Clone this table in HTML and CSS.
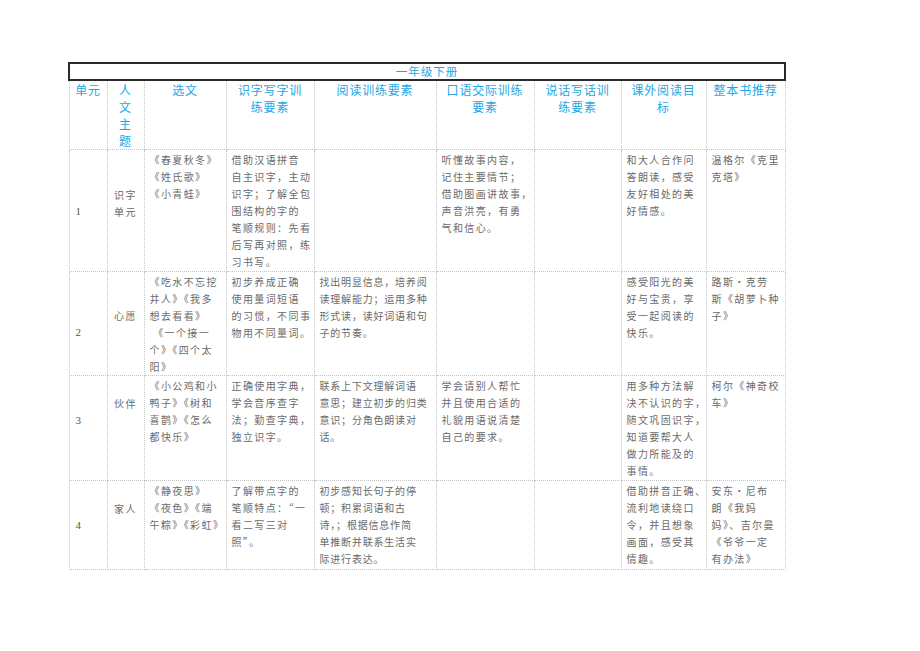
FILE: index.html
```html
<!DOCTYPE html>
<html lang="zh-CN">
<head>
<meta charset="utf-8">
<title>一年级下册</title>
<link rel="stylesheet" href="styles.css">
</head>
<body>
<div class="page">
<table class="plan">
  <colgroup>
    <col class="c1"><col class="c2"><col class="c3"><col class="c4"><col class="c5"><col class="c6"><col class="c7"><col class="c8"><col class="c9">
  </colgroup>
  <tr class="title-row"><td colspan="9">一年级下册</td></tr>
  <tr class="head-row">
    <th>单元</th>
    <th>人<br>文<br>主<br>题</th>
    <th>选文</th>
    <th>识字写字训<br>练要素</th>
    <th>阅读训练要素</th>
    <th>口语交际训练<br>要素</th>
    <th>说话写话训<br>练要素</th>
    <th>课外阅读目<br>标</th>
    <th>整本书推荐</th>
  </tr>
  <tr class="row r1">
    <td class="num">1</td>
    <td class="theme">识字<br>单元<br>&nbsp;</td>
    <td>《春夏秋冬》<br>《姓氏歌》<br>《小青蛙》</td>
    <td>借助汉语拼音<br>自主识字，主动<br>识字；了解全包<br>围结构的字的<br>笔顺规则：先看<br>后写再对照，练<br>习书写。</td>
    <td class="wide"></td>
    <td>听懂故事内容，<br>记住主要情节；<br>借助图画讲故事，<br>声音洪亮，有勇<br>气和信心。</td>
    <td></td>
    <td>和大人合作问<br>答朗读，感受<br>友好相处的美<br>好情感。</td>
    <td>温格尔《克里<br>克塔》</td>
  </tr>
  <tr class="row r2">
    <td class="num">&nbsp;<br>2</td>
    <td class="theme">心愿<br>&nbsp;</td>
    <td>《吃水不忘挖<br>井人》《我多<br>想去看看》<br>&nbsp;《一个接一<br>个》《四个太<br>阳》</td>
    <td>初步养成正确<br>使用量词短语<br>的习惯，不同事<br>物用不同量词。</td>
    <td class="wide">找出明显信息，培养阅<br>读理解能力；运用多种<br>形式读，读好词语和句<br>子的节奏。</td>
    <td></td>
    <td></td>
    <td>感受阳光的美<br>好与宝贵，享<br>受一起阅读的<br>快乐。</td>
    <td>路斯•克劳<br>斯《胡萝卜种<br>子》</td>
  </tr>
  <tr class="row r3">
    <td class="num">3<br>&nbsp;</td>
    <td class="theme">伙伴<br>&nbsp;<br>&nbsp;<br>&nbsp;</td>
    <td>《小公鸡和小<br>鸭子》《树和<br>喜鹊》《怎么<br>都快乐》</td>
    <td>正确使用字典，<br>学会音序查字<br>法；勤查字典，<br>独立识字。</td>
    <td class="wide">联系上下文理解词语<br>意思；建立初步的归类<br>意识；分角色朗读对<br>话。</td>
    <td>学会请别人帮忙<br>并且使用合适的<br>礼貌用语说清楚<br>自己的要求。</td>
    <td></td>
    <td>用多种方法解<br>决不认识的字，<br>随文巩固识字，<br>知道要帮大人<br>做力所能及的<br>事情。</td>
    <td>柯尔《神奇校<br>车》</td>
  </tr>
  <tr class="row r4">
    <td class="num">4</td>
    <td class="theme">家人<br>&nbsp;<br>&nbsp;</td>
    <td>《静夜思》<br>《夜色》《端<br>午粽》《彩虹》</td>
    <td>了解带点字的<br>笔顺特点：“一<br>看二写三对<br>照”。</td>
    <td class="wide">初步感知长句子的停<br>顿；积累词语和古<br>诗，；根据信息作简<br>单推断并联系生活实<br>际进行表达。</td>
    <td></td>
    <td></td>
    <td>借助拼音正确、<br>流利地读绕口<br>令，并且想象<br>画面，感受其<br>情趣。</td>
    <td>安东•尼布<br>朗《我妈<br>妈》、吉尔曼<br>《爷爷一定<br>有办法》</td>
  </tr>
</table>
</div>
</body>
</html>
```

FILE: styles.css
```css
html, body {
  margin: 0;
  padding: 0;
  background: #ffffff;
}

.page {
  padding: 62px 0 0 68px;
}

.plan {
  border-collapse: collapse;
  table-layout: fixed;
  width: 716px;
  font-family: "Liberation Serif", "Noto Sans CJK SC", serif;
}

.c1 { width: 38px; }
.c2 { width: 37px; }
.c3 { width: 82px; }
.c4 { width: 88px; }
.c5 { width: 122px; }
.c6 { width: 98px; }
.c7 { width: 87px; }
.c8 { width: 85px; }
.c9 { width: 79px; }

.plan td,
.plan th {
  border: 1px dotted #c4c4c4;
  padding: 0;
}

.title-row td {
  border: 2px solid #2a2a2a;
  height: 15px;
  text-align: center;
  font-family: "Noto Sans CJK SC", sans-serif;
  font-weight: 400;
  font-size: 11.5px;
  line-height: 15px;
  letter-spacing: 1px;
  color: #1ea7e4;
}

.head-row th {
  height: 68px;
  vertical-align: top;
  text-align: center;
  font-family: "Noto Sans CJK SC", sans-serif;
  font-weight: 400;
  font-size: 12px;
  line-height: 17px;
  letter-spacing: 0.8px;
  color: #1ea7e4;
  white-space: nowrap;
}

.row td {
  vertical-align: top;
  padding: 1px 2px 0 5px;
  font-size: 10px;
  font-weight: 400;
  line-height: 17px;
  letter-spacing: 1.4px;
  color: #6a6a6a;
  white-space: nowrap;
  font-family: "Noto Sans CJK SC", sans-serif;
}

.row td.wide {
  letter-spacing: 0.8px;
}

.row td.num {
  vertical-align: middle;
  padding-left: 6px;
  font-family: "Liberation Serif", serif;
  font-size: 11px;
  color: #555555;
}

.row td.theme {
  vertical-align: middle;
  text-align: center;
  padding-left: 2px;
  letter-spacing: 1.5px;
}

.r1 td { height: 120px; }
.r2 td { height: 102px; }
.r3 td { height: 103px; }
.r4 td { height: 87px; }
```
